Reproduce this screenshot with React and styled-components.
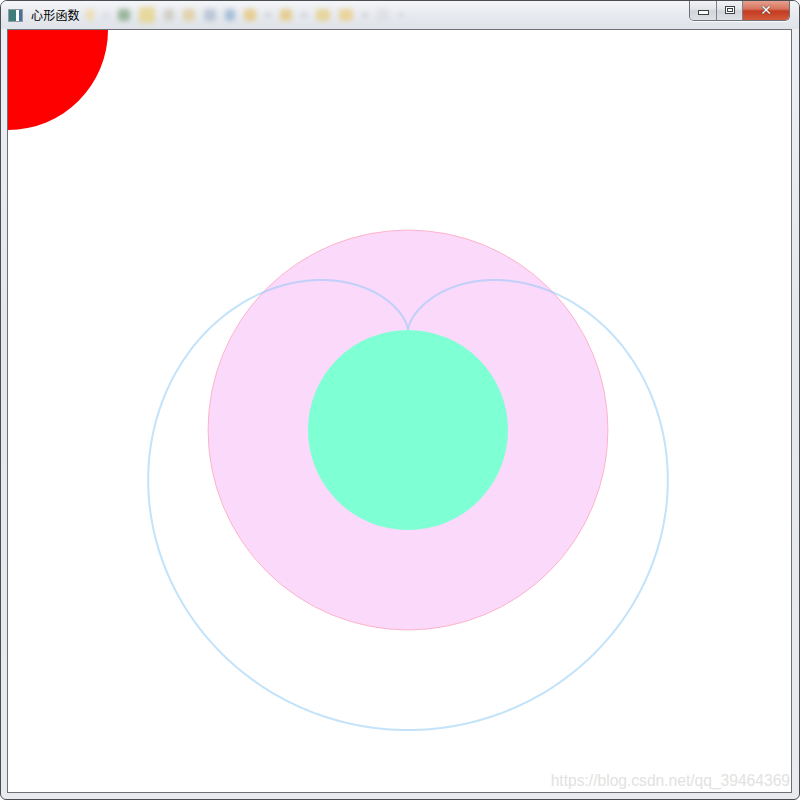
import React from 'react';
import styled, { createGlobalStyle } from 'styled-components';

const GlobalStyle = createGlobalStyle`
  html, body {
    margin: 0;
    padding: 0;
    background: #ffffff;
  }
  body {
    font-family: "Noto Sans CJK SC", "Liberation Sans", sans-serif;
  }
`;

const Window = styled.div`
  width: 800px;
  height: 800px;
  box-sizing: border-box;
  display: flex;
  flex-flow: column nowrap;
  background: linear-gradient(180deg, #eef0f4 0%, #e4e7ec 40%, #e9eaee 100%);
  border: 1px solid #4a4d52;
  border-radius: 7px 7px 6px 6px;
  overflow: hidden;
  position: relative;
`;

const TitleBar = styled.div`
  height: 28px;
  display: flex;
  align-items: center;
  padding-left: 7px;
  position: relative;
  background: linear-gradient(180deg, #f4f5f8 0%, #e6e9ee 55%, #dfe3e9 100%);
`;

const AppIcon = styled.div`
  width: 13px;
  height: 11px;
  border: 1px solid #8f9aa3;
  background: linear-gradient(90deg, #3e7e7a 0 55%, #ffffff 55% 75%, #4a6f9a 75%);
  margin-right: 8px;
`;

const Title = styled.span`
  font-size: 12px;
  color: #000000;
  letter-spacing: 0.2px;
  line-height: 1;
`;

const GlassToolbar = styled.div`
  display: flex;
  align-items: center;
  gap: 9px;
  margin-left: 6px;
  filter: blur(2.4px);
  opacity: 0.7;
`;

const Blob = styled.div`
  width: ${p => p.w || 12}px;
  height: ${p => p.h || 12}px;
  border-radius: 3px;
  background: ${p => p.c};
`;

const ButtonGroup = styled.div`
  position: absolute;
  top: -1px;
  right: 9px;
  display: flex;
  height: 20px;
  border: 1px solid #6d7178;
  border-top: none;
  border-radius: 0 0 5px 5px;
  overflow: hidden;
  box-shadow: 0 1px 0 rgba(255,255,255,0.8);
`;

const CaptionButton = styled.div`
  width: ${p => p.w}px;
  height: 100%;
  display: flex;
  align-items: center;
  justify-content: center;
  box-sizing: border-box;
  border-left: ${p => p.first ? 'none' : '1px solid #7d8188'};
  background: ${p => p.close
    ? 'linear-gradient(180deg, #e8a796 0%, #d7735d 45%, #c43b22 55%, #d45a3a 100%)'
    : 'linear-gradient(180deg, #f3f4f6 0%, #e3e5e9 45%, #d2d6dc 55%, #dde0e5 100%)'};
`;

const MinGlyph = styled.div`
  width: 9px;
  height: 3px;
  border: 1px solid #3c3f44;
  background: #ffffff;
  margin-top: 5px;
`;

const MaxGlyph = styled.div`
  width: 8px;
  height: 6px;
  border: 1px solid #3c3f44;
  background: #ffffff;
  box-shadow: inset 0 0 0 1px #ffffff, inset 0 0 0 2px #3c3f44;
`;

const CloseGlyph = styled.span`
  font-family: "DejaVu Sans", sans-serif;
  font-weight: bold;
  font-size: 14px;
  line-height: 1;
  color: #ffffff;
  text-shadow: 0 0 1px #3a2a28, 0 0 1px #3a2a28;
`;

const FrameBody = styled.div`
  flex: 1;
  display: flex;
  padding: 0 7px 6px 6px;
`;

const Client = styled.div`
  flex: 1;
  border: 1px solid #6e7075;
  background: #ffffff;
  position: relative;
  overflow: hidden;
`;

const Canvas = styled.svg`
  display: block;
  width: 100%;
  height: 100%;
`;

const Watermark = styled.span`
  position: absolute;
  right: 1px;
  bottom: 2px;
  font-family: "Liberation Sans", Arial, sans-serif;
  font-size: 15.6px;
  color: #e2e2e2;
  text-shadow: 0 0 1px #ffffff;
`;

function cardioidPath(cx, cy, a) {
  const pts = [];
  const n = 720;
  for (let i = 0; i <= n; i++) {
    const t = (i / n) * Math.PI * 2;
    const r = a * (1 - Math.cos(t));
    const x = cx + r * Math.sin(t);
    const y = cy - r * Math.cos(t);
    pts.push(`${i === 0 ? 'M' : 'L'}${x.toFixed(2)},${y.toFixed(2)}`);
  }
  return pts.join(' ');
}

const toolbarBlobs = [
  { c: '#f1d9a0', w: 8 },
  { c: '#c9ccd2', w: 6, h: 4 },
  { c: '#7aa07a', w: 12 },
  { c: '#e6d17a', w: 16, h: 16 },
  { c: '#c9c4b8', w: 10 },
  { c: '#e0c890', w: 12 },
  { c: '#a8b8cc', w: 12 },
  { c: '#8eaed0', w: 10 },
  { c: '#e7c26a', w: 12 },
  { c: '#b9bcc2', w: 6, h: 4 },
  { c: '#e6c36c', w: 12 },
  { c: '#b9bcc2', w: 6, h: 4 },
  { c: '#e8cc7a', w: 14 },
  { c: '#eccb7a', w: 14 },
  { c: '#b9bcc2', w: 6, h: 4 },
  { c: '#dcdde0', w: 12 },
  { c: '#c9ccd2', w: 6, h: 4 },
];

export default function App() {
  return (
    <>
      <GlobalStyle />
      <Window>
        <TitleBar>
          <AppIcon />
          <Title>心形函数</Title>
          <GlassToolbar>
            {toolbarBlobs.map((b, i) => (
              <Blob key={i} c={b.c} w={b.w} h={b.h} />
            ))}
          </GlassToolbar>
          <ButtonGroup>
            <CaptionButton w={26} first><MinGlyph /></CaptionButton>
            <CaptionButton w={26}><MaxGlyph /></CaptionButton>
            <CaptionButton w={47} close><CloseGlyph>✕</CloseGlyph></CaptionButton>
          </ButtonGroup>
        </TitleBar>
        <FrameBody>
          <Client>
            <Canvas viewBox="0 0 783 762" preserveAspectRatio="xMinYMin slice">
              <circle cx="0" cy="0" r="100" fill="#ff0000" />
              <circle cx="400" cy="400" r="200" fill="rgba(238,130,238,0.3)" stroke="rgba(255,90,110,0.35)" strokeWidth="1" />
              <path d={cardioidPath(400, 300, 200)} fill="none" stroke="rgba(135,200,245,0.5)" strokeWidth="2" />
              <circle cx="400" cy="400" r="100" fill="#7fffd4" />
            </Canvas>
            <Watermark>https://blog.csdn.net/qq_39464369</Watermark>
          </Client>
        </FrameBody>
      </Window>
    </>
  );
}
